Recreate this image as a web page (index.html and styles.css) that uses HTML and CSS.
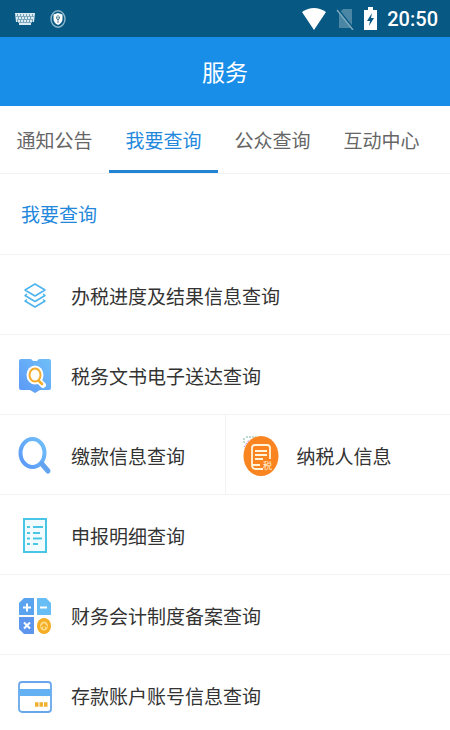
FILE: index.html
```html
<!DOCTYPE html>
<html lang="zh-CN">
<head>
<meta charset="utf-8">
<meta name="viewport" content="width=device-width, initial-scale=1">
<title>服务</title>
<link rel="stylesheet" href="styles.css">
</head>
<body>
<div class="status">
  <svg class="keyboard" viewBox="0 0 20 14" width="20" height="14" aria-hidden="true">
    <path fill="#dcebf2" d="M0 1h20l-1 9h-3v3H4v-3H1z"/>
    <path stroke="#075883" stroke-width="1" stroke-dasharray="1 2" d="M2 3h17M3 6h15M2 9h17"/>
    <path stroke="#7fa9bf" stroke-width="1" d="M1 4.500h18M2 7.500h16M3 10.500h14"/>
  </svg>
  <svg viewBox="0 0 18 20" width="18" height="20" aria-hidden="true">
    <ellipse cx="9" cy="10" rx="7" ry="8.200" fill="none" stroke="#8db6c9" stroke-width="1.400"/>
    <path fill="#fff" d="M9 4l4.500 1.500v5Q13 14 9 16q-4-2-4.500-5.500v-5z"/>
    <path fill="none" stroke="#527f94" stroke-width="1" d="M7.500 7.500v2L9 11l1.500-1.500v-2M9 6v8"/>
  </svg>
  <div class="signals">
    <svg viewBox="0 0 24 22" width="24" height="22" aria-hidden="true"><path fill="#fff" d="M0 4Q12-4 24 4L12 22z"/></svg>
    <svg viewBox="0 0 18 22" width="18" height="22" aria-hidden="true">
      <path fill="#4b87a5" d="M7 1h9v19H3V5z"/>
      <path stroke="#075883" stroke-width="1.500" d="M2 1l16 20"/>
      <path stroke="#7ba7bd" stroke-width="1.500" d="M1 2l16 20"/>
    </svg>
    <svg viewBox="0 0 13 24" width="13" height="24" aria-hidden="true">
      <path fill="#fff" d="M4 0h5v3h4v20H0V3h4z"/><path fill="#075883" d="M8 6l-5 8h3l-1 5 5-8H7z"/>
    </svg>
    <time>20:50</time>
  </div>
</div>
<header class="header"><h1>服务</h1></header>
<nav class="tabs">
  <a href="#notice">通知公告</a>
  <a href="#query" class="active" aria-current="page">我要查询</a>
  <a href="#public">公众查询</a>
  <a href="#center">互动中心</a>
</nav>
<main id="query">
  <h2 class="section">我要查询</h2>
  <div class="row"><a class="item" href="#progress">
    <svg class="icon" viewBox="0 0 36 40" aria-hidden="true"><g fill="none" stroke="#4bb3ee" stroke-width="1.500" stroke-linejoin="round">
      <path d="M18 8l10 6-10 6-10-6z"/><path d="M10 18l-2 1.500 10 6 10-6-2-1.500M10 23.500L8 25l10 6 10-6-2-1.500"/></g></svg>
    <span>办税进度及结果信息查询</span></a></div>
  <div class="row"><a class="item" href="#documents">
    <svg class="icon" viewBox="0 0 36 40" aria-hidden="true">
      <defs><linearGradient id="blue" x1="1" y1="0" x2="0" y2="1"><stop stop-color="#70bff8"/><stop offset="1" stop-color="#5b98f7"/></linearGradient></defs>
      <path fill="url(#blue)" d="M4 3h9q2 0 3 2h4q1-2 3-2h9q2 0 2 2v27q0 2-2 2h-9l-5 3-5-3H4q-2 0-2-2V5q0-2 2-2z"/>
      <path stroke="#fff" stroke-width="6" stroke-linecap="round" d="M22 25l4 4"/><ellipse cx="18" cy="19" rx="8.500" ry="9.500" fill="#fff"/>
      <ellipse cx="18" cy="19" rx="5.500" ry="6.500" fill="#fff" stroke="#f3ac2d" stroke-width="2"/><path stroke="#f3ac2d" stroke-width="2.500" stroke-linecap="round" d="M22 25l3 3"/>
    </svg><span>税务文书电子送达查询</span></a></div>
  <div class="row split"><a class="item" href="#payment">
    <svg class="icon" viewBox="0 0 36 40" aria-hidden="true">
      <ellipse cx="15.500" cy="17" rx="12" ry="14" fill="none" stroke="url(#blue)" stroke-width="4"/><path fill="none" stroke="#63a3ef" stroke-width="5" stroke-linecap="round" d="M25 28l6 7"/>
    </svg><span>缴款信息查询</span></a><a class="item" href="#taxpayer">
    <svg class="icon" viewBox="0 0 36 40" aria-hidden="true">
      <path fill="none" stroke="#79b99b" stroke-width="1" stroke-dasharray="2 1" d="M1 7V1M3 1h10"/><path stroke="#a66dce" stroke-dasharray="1 1" d="M1 11l5-7"/>
      <ellipse cx="18" cy="20" rx="17.500" ry="20" fill="#fa8420"/>
      <path fill="none" stroke="#fff3d9" stroke-width="1.800" d="M20 33h-7q-4 0-4-4V12q0-3 3-3h12q3 0 3 3v11M12 15h12M12 19h12M12 23h8M9 29h8"/>
      <text class="stamp" x="20" y="33">税</text>
    </svg><span>纳税人信息</span></a></div>
  <div class="row"><a class="item" href="#details">
    <svg class="icon" viewBox="0 0 36 40" aria-hidden="true"><path fill="#f2fcff" stroke="#49c6e6" stroke-width="2" d="M7 3h22v33H7z"/>
      <path stroke="#49c6e6" stroke-width="2" d="M10 11h3M16 11h10M10 17h3M16 17h7M10 22.500h3M16 22.500h9M10 28h3M16 28h5"/></svg>
    <span>申报明细查询</span></a></div>
  <div class="row"><a class="item" href="#accounting">
    <svg class="icon" viewBox="0 0 36 40" aria-hidden="true">
      <path fill="#5aa4ef" d="M7 2h10v17H2V7z"/><path fill="#68bdf5" d="M20 2h9l5 5v12H20z"/><path fill="#5d96ed" d="M2 21h15v17H7l-5-5z"/>
      <ellipse cx="27" cy="30" rx="7" ry="8" fill="#f4ad25"/><ellipse cx="27" cy="30" rx="4" ry="4.500" fill="#ffdc84"/>
      <path fill="none" stroke="#fff" stroke-width="2" d="M6 11.500h8M10 7.500v8M23 11.500h7M7 26.500l6 6M13 26.500l-6 6"/><path fill="none" stroke="#f4ad25" stroke-width="1.500" d="M24 31l3-3 3 3M27 29v4"/>
    </svg><span>财务会计制度备案查询</span></a></div>
  <div class="row"><a class="item" href="#deposit">
    <svg class="icon" viewBox="0 0 36 40" aria-hidden="true">
      <rect x="2" y="6" width="32" height="30" rx="3" fill="#fff" stroke="#69a7ec" stroke-width="1.800"/><path fill="#63b1f2" d="M2 13h32v7H2z"/><path stroke="#f1b02e" stroke-width="4.500" stroke-dasharray="3.500 1" d="M18 28.500h13"/>
    </svg><span>存款账户账号信息查询</span></a></div>
</main>
</body>
</html>
```
FILE: styles.css
```css
* { box-sizing: border-box; }
html { scrollbar-width: none; }
body {
  margin: 0;
  background: #fff;
  color: #333;
  font-family: "Noto Sans CJK SC", sans-serif;
  font-size: 19px;
  line-height: 28px;
}
a { color: inherit; text-decoration: none; }
h1, h2 { margin: 0; font-weight: 400; }
svg { display: block; flex: none; }
.status {
  display: flex;
  align-items: center;
  gap: 14px;
  height: 37px;
  padding: 0 12px 0 15px;
  background: #075883;
  color: #fff;
}
.signals {
  display: flex;
  align-items: center;
  gap: 10px;
  margin-left: auto;
}
.signals time {
  font-family: Roboto, sans-serif;
  font-size: 20px;
  font-weight: 500;
}
.header {
  display: flex;
  align-items: center;
  justify-content: center;
  height: 69px;
  padding-bottom: 2px;
  background: #188ee9;
  color: #fff;
}
.header h1 { font-size: 23px; }
.tabs {
  display: flex;
  height: 68px;
  border-bottom: 1px solid #f2f2f2;
  color: #666;
}
.tabs a {
  display: flex;
  flex: 0 0 109px;
  align-items: center;
  justify-content: center;
  border-top: 3px solid transparent;
  border-bottom: 3px solid transparent;
}
.tabs .active {
  border-bottom-color: #2383d4;
  color: #2388dc;
}
.section {
  padding: 26px 21px;
  border-bottom: 1px solid #f2f2f2;
  color: #2388dc;
  font-size: 19px;
}
.row {
  display: flex;
  border-bottom: 1px solid #f2f2f2;
}
.item {
  display: flex;
  flex: 1;
  align-items: center;
  gap: 18px;
  min-height: 79px;
  padding: 2px 17px 0;
}
.item + .item { border-left: 1px solid #f2f2f2; }
.icon { width: 36px; height: 40px; }
.stamp { fill: #fff3d9; font-size: 9px; }
```
